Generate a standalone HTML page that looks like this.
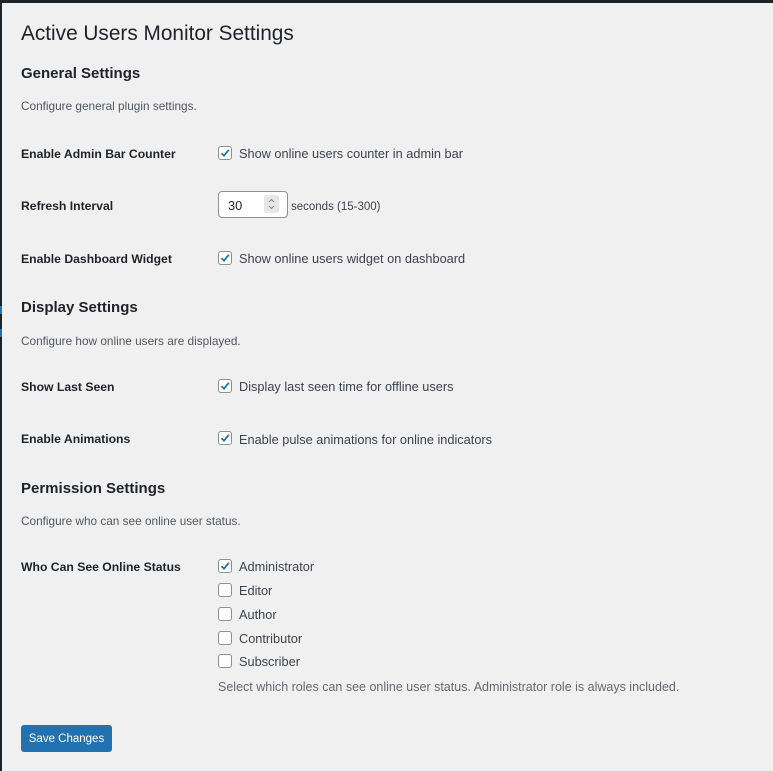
<!DOCTYPE html>
<html><head><meta charset="utf-8"><style>
html,body{margin:0;padding:0;width:773px;height:771px;overflow:hidden;background:#f0f0f1;font-family:"Liberation Sans",sans-serif;color:#1d2327;position:relative}
.t{position:absolute;white-space:nowrap;line-height:20px}
.h1{font-size:20.8px;line-height:30px;color:#1d2327}
.h2{font-size:15px;font-weight:bold}
.d{font-size:11.8px;color:#50575e}
.l{font-size:12.2px;font-weight:bold}
.c{font-size:12.75px;color:#3c434a}
.cb{position:absolute;left:218px;width:12px;height:12px;border:1px solid #8c8f94;border-radius:3px;background:#fff}
.cb svg{position:absolute;left:0;top:0}
</style></head><body>
<div style="position:absolute;left:0;top:0;width:773px;height:3px;background:#1d2327"></div>
<div style="position:absolute;left:0;top:0;width:2px;height:771px;background:#1d2327"></div>
<div style="position:absolute;left:0;top:306px;width:2px;height:8px;background:#2271b1"></div>
<div style="position:absolute;left:0;top:329px;width:2px;height:8px;background:#2271b1"></div>

<div class="t h1" style="left:21px;top:19px">Active Users Monitor Settings</div>

<div class="t h2" style="left:21px;top:64px">General Settings</div>
<div class="t d" style="left:21px;top:96px">Configure general plugin settings.</div>

<div class="t l" style="left:21px;top:144px">Enable Admin Bar Counter</div>
<div class="cb" style="top:146px"><svg width="12" height="12" viewBox="0 0 12 12"><path d="M2.5 6.2 L5 8.7 L9.8 2.8" fill="none" stroke="#2271b1" stroke-width="1.8"/></svg></div>
<div class="t c" style="left:239px;top:144px">Show online users counter in admin bar</div>

<div class="t l" style="left:21px;top:196px">Refresh Interval</div>
<div style="position:absolute;left:218px;top:191px;width:68px;height:25px;border:1px solid #8c8f94;border-radius:4px;background:#fff"></div>
<div class="t c" style="left:228px;top:196px;color:#1d2327">30</div>
<div style="position:absolute;left:264px;top:195px;width:15px;height:18px;background:#e6e6e6;border-radius:2px"></div>
<svg style="position:absolute;left:264px;top:195px" width="15" height="18" viewBox="0 0 15 18"><path d="M5 7 L7.5 4.5 L10 7 M5 11 L7.5 13.5 L10 11" fill="none" stroke="#888" stroke-width="1"/></svg>
<div class="t" style="left:291px;top:197px;font-size:11.5px;color:#3c434a">seconds (15-300)</div>

<div class="t l" style="left:21px;top:249px">Enable Dashboard Widget</div>
<div class="cb" style="top:251px"><svg width="12" height="12" viewBox="0 0 12 12"><path d="M2.5 6.2 L5 8.7 L9.8 2.8" fill="none" stroke="#2271b1" stroke-width="1.8"/></svg></div>
<div class="t c" style="left:239px;top:249px">Show online users widget on dashboard</div>

<div class="t h2" style="left:21px;top:298px">Display Settings</div>
<div class="t d" style="left:21px;top:331px">Configure how online users are displayed.</div>

<div class="t l" style="left:21px;top:377px">Show Last Seen</div>
<div class="cb" style="top:379px"><svg width="12" height="12" viewBox="0 0 12 12"><path d="M2.5 6.2 L5 8.7 L9.8 2.8" fill="none" stroke="#2271b1" stroke-width="1.8"/></svg></div>
<div class="t c" style="left:239px;top:377px">Display last seen time for offline users</div>

<div class="t l" style="left:21px;top:429px">Enable Animations</div>
<div class="cb" style="top:431px"><svg width="12" height="12" viewBox="0 0 12 12"><path d="M2.5 6.2 L5 8.7 L9.8 2.8" fill="none" stroke="#2271b1" stroke-width="1.8"/></svg></div>
<div class="t c" style="left:239px;top:430px">Enable pulse animations for online indicators</div>

<div class="t h2" style="left:21px;top:479px">Permission Settings</div>
<div class="t d" style="left:21px;top:511px">Configure who can see online user status.</div>

<div class="t l" style="left:21px;top:557px">Who Can See Online Status</div>
<div class="cb" style="top:559px"><svg width="12" height="12" viewBox="0 0 12 12"><path d="M2.5 6.2 L5 8.7 L9.8 2.8" fill="none" stroke="#2271b1" stroke-width="1.8"/></svg></div>
<div class="t c" style="left:239px;top:557px">Administrator</div>
<div class="cb" style="top:583px"></div>
<div class="t c" style="left:239px;top:581px">Editor</div>
<div class="cb" style="top:607px"></div>
<div class="t c" style="left:239px;top:605px">Author</div>
<div class="cb" style="top:631px"></div>
<div class="t c" style="left:239px;top:629px">Contributor</div>
<div class="cb" style="top:654px"></div>
<div class="t c" style="left:239px;top:652px">Subscriber</div>
<div class="t" style="left:218px;top:677px;font-size:12.5px;color:#646970">Select which roles can see online user status. Administrator role is always included.</div>

<div style="position:absolute;left:21px;top:725px;width:91px;height:27px;background:#2271b1;border-radius:3px;color:#fff;font-size:11.5px;line-height:29px;text-align:center">Save Changes</div>
</body></html>
